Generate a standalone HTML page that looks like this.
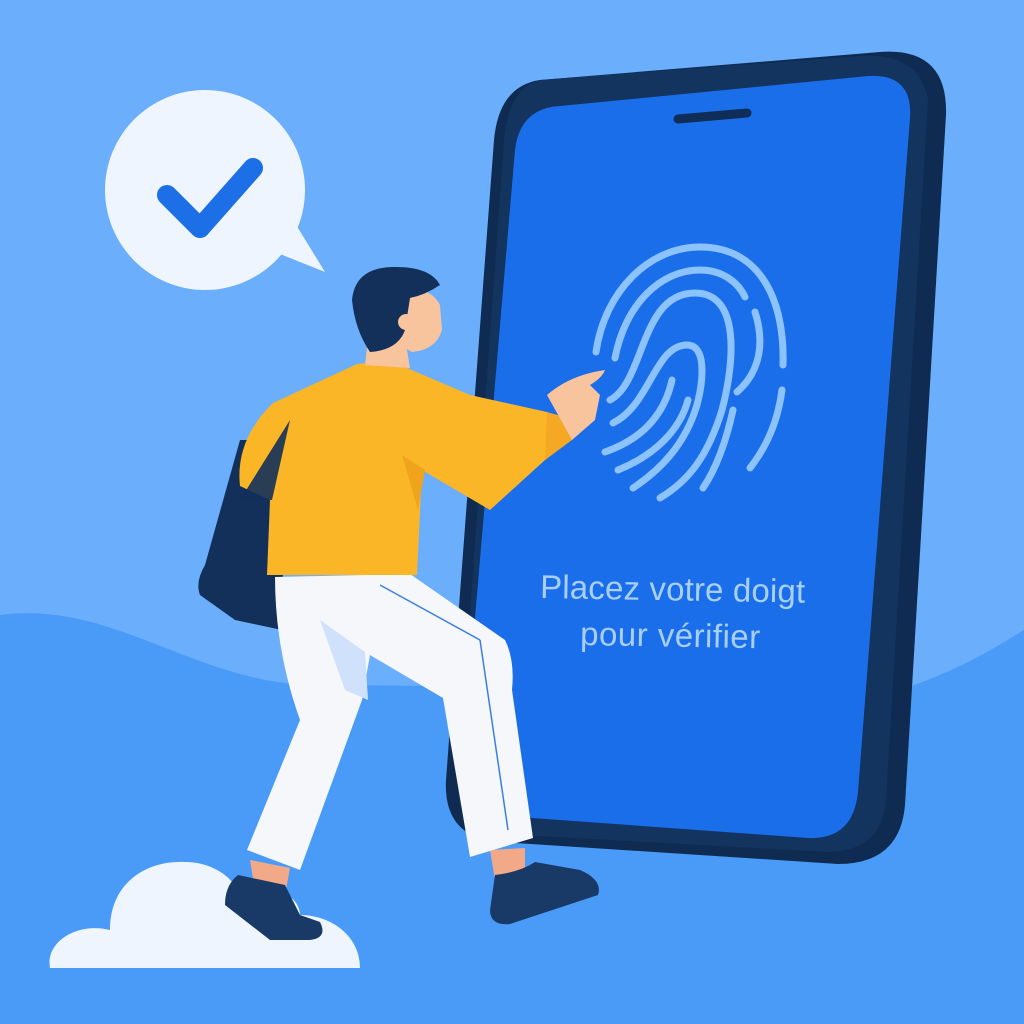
<!DOCTYPE html>
<html><head><meta charset="utf-8"><style>html,body{margin:0;padding:0;background:#6aaefc}svg{display:block}</style></head>
<body>
<svg width="1024" height="1024" viewBox="0 0 1024 1024" xmlns="http://www.w3.org/2000/svg">
<rect width="1024" height="1024" fill="#6aaefc"/>
<path d="M0,615 C120,600 200,690 330,685 L900,690 C960,670 1000,645 1024,630 V1024 H0Z" fill="#4a9bf8"/>
<!-- phone -->
<path d="M540,80 L880,52 Q948,47 946,115 L905,805 Q900,864 838,864 L500,842 Q443,838 446,780 L494,140 Q499,86 540,80Z" fill="#0f2b52"/>
<path d="M540,80 L860,56 Q920,52 928,100 L886,800 Q882,850 830,852 L500,834 Q455,830 458,780 L504,140 Q509,88 540,80Z" fill="#12345f"/>
<path d="M560,106 L868,76 Q913,73 910,118 L858,792 Q853,840 808,838 L505,816 Q459,812 462,770 L515,150 Q520,108 560,106Z" fill="#1a6eea"/>
<line x1="678" y1="119" x2="747" y2="113" stroke="#0f2d57" stroke-width="9" stroke-linecap="round"/>
<!-- fingerprint -->
<g fill="none" stroke="#8cc2fd" stroke-width="7" stroke-linecap="round">
<path d="M596,352 C605,290 650,247 700,247 C760,247 785,300 783,365"/>
<path d="M615,358 C625,305 660,270 700,270 C722,270 738,282 745,297"/>
<path d="M755,312 C764,340 762,370 737,392"/>
<path d="M782,390 C778,420 768,445 750,468"/>
<path d="M733,410 Q722,460 703,488"/>
<path d="M610,400 C645,382 640,293 695,293 C740,293 735,360 722,410 C708,455 690,480 660,498"/>
<path d="M613,423 C650,405 655,345 687,345 C706,345 704,378 697,405 C685,445 660,470 633,488"/>
<path d="M605,452 C645,438 665,412 672,380"/>
<path d="M618,470 C655,455 680,430 688,400"/>
</g>
<text x="540" y="598" font-family="Liberation Sans, sans-serif" font-size="33" fill="#a8cffd" textLength="265" transform="rotate(1 540 598)">Placez votre doigt</text>
<text x="580" y="645" font-family="Liberation Sans, sans-serif" font-size="33" fill="#a8cffd" textLength="180" transform="rotate(1 580 645)">pour vérifier</text>
<!-- speech bubble -->
<circle cx="205" cy="190" r="100" fill="#eef5fe"/>
<path d="M270,250 L325,272 L290,215Z" fill="#eef5fe"/>
<path d="M167,195 L200,228 L253,168" fill="none" stroke="#1d6fe8" stroke-width="20" stroke-linecap="round" stroke-linejoin="round"/>
<!-- cloud -->
<path d="M50,968 C45,940 80,922 110,930 C110,880 150,860 185,862 C215,862 235,880 240,895 C270,880 300,895 300,915 C330,915 360,935 360,968Z" fill="#eef5fe"/>
<!-- bag -->
<path d="M240,440 L285,440 L282,630 L235,620 L200,595 Q195,582 205,565Z" fill="#12305a"/>
<!-- ankles -->
<path d="M250,860 L290,868 L285,895 L255,890Z" fill="#f2a988"/>
<path d="M490,850 L525,848 L525,875 L495,880Z" fill="#f2a988"/>
<!-- shoes -->
<path d="M238,875 L285,885 L300,915 L320,922 Q328,938 310,940 L270,940 L225,905 Q225,885 238,875Z" fill="#193a66"/>
<path d="M495,875 Q520,872 535,862 L580,870 Q603,880 598,895 L510,924 Q490,926 490,910Z" fill="#193a66"/>
<!-- pants -->
<path d="M275,577 L410,574 L505,640 Q515,660 512,690 L533,838 L470,857 L443,698 L370,655 L362,700 L300,870 L247,850 L300,720 Q275,650 275,577Z" fill="#f5f7fb"/>
<path d="M320,620 L365,652 L368,700 L345,690Z" fill="#cfe1fb"/>
<line x1="380" y1="585" x2="480" y2="640" stroke="#3a7ee8" stroke-width="1.5"/>
<line x1="480" y1="640" x2="508" y2="830" stroke="#3a7ee8" stroke-width="1.5"/>
<!-- sweater -->
<path d="M357,364 Q385,360 407,368 L470,395 L547,412 L570,440 L545,460 L490,510 L422,470 L417,575 L267,575 L270,500 L240,486 Q235,440 273,403Z" fill="#fbb628"/>
<path d="M547,412 L568,418 L572,440 L545,460Z" fill="#f5a823"/>
<path d="M402,455 L425,470 L418,510Z" fill="#f0a31d"/>
<path d="M290,420 L240,500 L272,500Z" fill="#12305a" opacity="0.9"/>
<!-- neck & head -->
<path d="M368,340 L405,338 L410,368 L365,365Z" fill="#f8c49e"/>
<path d="M398,290 Q430,285 440,305 L442,330 Q436,350 412,352 L400,345Z" fill="#f8c49e"/>
<path d="M352,300 Q355,268 392,267 Q430,266 440,285 Q425,295 410,298 L405,330 Q398,350 370,352 Q355,330 352,300Z" fill="#12305a"/>
<circle cx="406" cy="322" r="8" fill="#f8c49e"/>
<!-- hand -->
<path d="M547,395 Q570,375 605,370 Q602,378 590,385 L600,395 L595,420 L572,440Z" fill="#f8c49e"/>
</svg>
</body></html>
